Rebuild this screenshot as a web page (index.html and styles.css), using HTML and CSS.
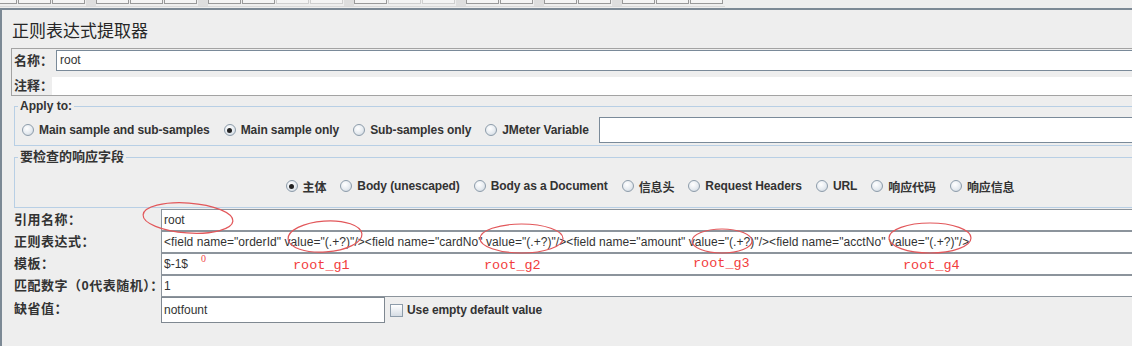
FILE: index.html
```html
<!DOCTYPE html>
<html>
<head>
<meta charset="utf-8" />
<title>正则表达式提取器</title>
<link rel="stylesheet" href="styles.css">
</head>
<body>
<div class="toolbar">
    <div class="tb-group first"><i class="tb-btn"></i><i class="tb-btn"></i><i class="tb-btn"></i></div>
    <div class="tb-sep"></div>
    <div class="tb-group"><i class="tb-btn"></i><i class="tb-btn"></i><i class="tb-btn"></i></div>
    <div class="tb-sep"></div>
    <div class="tb-group"><i class="tb-btn"></i><i class="tb-btn"></i><i class="tb-btn off"></i><i class="tb-btn off"></i></div>
    <div class="tb-sep"></div>
    <div class="tb-group"><i class="tb-btn"></i><i class="tb-btn off"></i><i class="tb-btn off"></i></div>
    <div class="tb-sep"></div>
    <div class="tb-group"><i class="tb-btn"></i><i class="tb-btn"></i></div>
    <div class="tb-sep"></div>
    <div class="tb-group"><i class="tb-btn"></i><i class="tb-btn"></i></div>
    <div class="tb-sep"></div>
    <div class="tb-group"><i class="tb-btn"></i><i class="tb-btn"></i><i class="tb-btn"></i></div>
</div>

<div class="panel">
    <h1 class="title">正则表达式提取器</h1>

    <div class="namebox">
        <div class="name-row">
            <label class="lbl">名称：</label>
            <div class="name-field">root</div>
        </div>
        <div class="comment-row">
            <label class="lbl">注释：</label>
            <div class="comment-field"></div>
        </div>
    </div>

    <fieldset class="group apply">
        <legend>Apply to:</legend>
        <div class="radios">
            <span class="opt"><i class="radio"></i>Main sample and sub-samples</span>
            <span class="opt"><i class="radio on"></i>Main sample only</span>
            <span class="opt"><i class="radio"></i>Sub-samples only</span>
            <span class="opt"><i class="radio"></i>JMeter Variable</span>
            <div class="var-field"></div>
        </div>
    </fieldset>

    <fieldset class="group check-fields">
        <legend>要检查的响应字段</legend>
        <div class="radios centered">
            <span class="opt"><i class="radio on"></i>主体</span>
            <span class="opt"><i class="radio"></i>Body (unescaped)</span>
            <span class="opt"><i class="radio"></i>Body as a Document</span>
            <span class="opt"><i class="radio"></i>信息头</span>
            <span class="opt"><i class="radio"></i>Request Headers</span>
            <span class="opt"><i class="radio"></i>URL</span>
            <span class="opt"><i class="radio"></i>响应代码</span>
            <span class="opt"><i class="radio"></i>响应信息</span>
        </div>
    </fieldset>

    <div class="form">
        <label class="lbl">引用名称：</label>
        <div class="field">root</div>
        <label class="lbl">正则表达式：</label>
        <div class="field regex">&lt;field name="orderId" value="(.+?)"/&gt;&lt;field name="cardNo" value="(.+?)"/&gt;&lt;field name="amount" value="(.+?)"/&gt;&lt;field name="acctNo" value="(.+?)"/&gt;</div>
        <label class="lbl">模板：</label>
        <div class="field">$-1$</div>
        <label class="lbl">匹配数字（0代表随机）：</label>
        <div class="field">1</div>
        <label class="lbl last">缺省值：</label>
        <div class="default-row">
            <div class="field short">notfount</div>
            <span class="opt"><i class="check"></i>Use empty default value</span>
        </div>
    </div>
</div>

<!-- 红色标注 -->
<div class="notes">
    <svg width="1132" height="346" viewBox="0 0 1132 346">
        <g fill="none" stroke="#e2575a" stroke-width="1.2">
            <ellipse cx="188" cy="218" rx="45" ry="15" transform="rotate(4 188 218)" />
            <ellipse cx="325" cy="236.5" rx="37" ry="15.5" transform="rotate(-4 325 236.5)" />
            <ellipse cx="521.5" cy="238.5" rx="41.5" ry="14.5" />
            <ellipse cx="722" cy="241" rx="30" ry="12" />
            <ellipse cx="930" cy="238" rx="41" ry="15" />
        </g>
    </svg>
    <span class="zero">0</span>
    <span class="tag g1">root_g1</span>
    <span class="tag g2">root_g2</span>
    <span class="tag g3">root_g3</span>
    <span class="tag g4">root_g4</span>
</div>
</body>
</html>
```

FILE: styles.css
```css
html,body{margin:0;padding:0;overflow:hidden;}
body{position:relative;width:1132px;height:346px;background:#eee;color:#333;font:12px "Liberation Sans","Noto Sans CJK SC",sans-serif;}
i{font-style:normal;}

/* 顶部工具栏 */
.toolbar{display:flex;width:725px;height:6px;border-bottom:1px solid #d9d9d9;margin-bottom:1px;overflow:hidden;}
.tb-group{display:flex;}
.tb-group.first{margin-left:-16px;}
.tb-btn{width:33px;height:4px;margin-right:1px;box-sizing:border-box;border:1px solid #999;border-top:0;background:#f4f4f4;}
.tb-btn.off{border-color:#cfcfcf;}
.tb-sep{width:10px;background:#dedede;}

/* 主面板 */
.panel{width:1288px;height:338px;border-top:2px solid #7c8995;border-left:2px solid #7c8995;}
.title{margin:0 0 0 10px;padding-top:10px;font:normal 17px/20px "Noto Sans CJK SC",sans-serif;color:#262626;}
.lbl{font-weight:bold;font-size:13px;font-family:"Liberation Sans","Noto Sans CJK SC",sans-serif;white-space:nowrap;color:#333;}

.namebox{margin:8px 0 0 9px;border:1px solid #a3a3a3;border-right:0;}
.name-row{display:flex;height:23px;padding-top:1px;box-sizing:border-box;}
.name-row .lbl{width:44px;padding-left:2px;box-sizing:border-box;line-height:21px;}
.name-field{flex:1;height:21px;box-sizing:border-box;border:1px solid #7a8a99;border-right:0;background:#fff;padding-left:3px;line-height:19px;}
.comment-row{display:flex;align-items:flex-end;height:23px;}
.comment-row .lbl{width:40px;padding-left:2px;box-sizing:border-box;line-height:18px;}
.comment-field{flex:1;height:18px;background:#fff;}

/* 分组框 */
.group{margin:3px 4px 0 12px;border:1px solid #b8cfe5;padding:4px 7px 2px 7px;min-width:0;}
.group legend{margin-left:-4px;padding:0 2px;font-weight:bold;font-size:12px;line-height:14px;color:#333;}
.check-fields{margin-top:4px;padding-top:12px;padding-bottom:11px;}
.check-fields legend{font-size:13px;}

.radios{display:flex;align-items:center;gap:14px;height:26px;}
.radios.centered{justify-content:center;height:20px;}
.opt{display:flex;align-items:center;gap:5px;font-weight:bold;font-size:12px;letter-spacing:-0.1px;white-space:nowrap;color:#333;}
.radio{position:relative;width:12px;height:12px;box-sizing:border-box;border:1px solid #8d9caa;border-radius:50%;background:radial-gradient(circle at 40% 35%,#fff 0,#e6ebf0 55%,#c4ced8 100%);}
.radio.on::after{content:"";position:absolute;left:2.5px;top:2.5px;width:5px;height:5px;border-radius:50%;background:#222;}
.var-field{flex:1;height:26px;margin-left:-4px;box-sizing:border-box;border:1px solid #7a8a99;border-right:0;background:#fff;}

/* 下方表单 */
.form{display:grid;grid-template-columns:149px 1fr;grid-template-rows:22px 22px 22px 22px 26px;margin:1px 0 0 10px;}
.form .lbl{display:flex;align-items:center;padding:0 0 4px 2px;letter-spacing:0.5px;}
.form .lbl.last{padding-bottom:6px;}
.field{display:flex;align-items:center;box-sizing:border-box;border:1px solid #8c949c;border-right:0;background:#fff;padding-left:2px;white-space:nowrap;overflow:hidden;font-size:12px;color:#333;}
.field.regex{letter-spacing:0.055px;}
.default-row{display:flex;align-items:center;}
.field.short{width:224px;height:26px;border:1px solid #7f8891;}
.default-row .opt{gap:4px;margin-left:5px;}
.check{width:13px;height:13px;box-sizing:border-box;border:1px solid #8d9caa;background:linear-gradient(#fff,#d5dce4);}

/* 红色标注层 */
.notes{position:absolute;left:0;top:0;width:1132px;height:346px;pointer-events:none;}
.notes svg{position:absolute;left:0;top:0;}
.zero{position:absolute;left:201px;top:253px;color:#f04848;font:10px/12px "Liberation Serif",serif;}
.tag{position:absolute;color:#f23c3c;font:13.5px/14px "Liberation Mono",monospace;}
.tag.g1{left:293px;top:259px;}
.tag.g2{left:484px;top:259px;}
.tag.g3{left:693px;top:257px;}
.tag.g4{left:903px;top:259px;}
```
